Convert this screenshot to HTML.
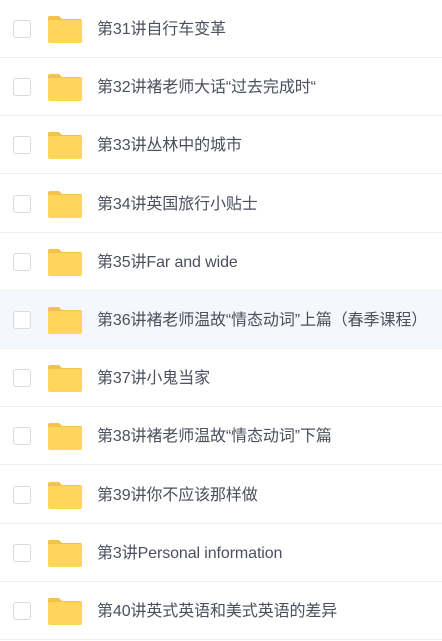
<!DOCTYPE html>
<html><head><meta charset="utf-8"><style>
body{margin:0;width:442px;height:638px;overflow:hidden;background:#fff;font-family:"Liberation Sans","Noto Sans CJK SC",sans-serif;}
.r{position:absolute;left:0;width:442px;height:58px;border-bottom:1px solid #eef0f4;box-sizing:border-box;}
.r.h{background:#f4f7fc;}
.cb{position:absolute;left:13px;top:20px;width:18px;height:18px;border:1px solid #d6dae2;border-radius:3px;box-sizing:border-box;background:#fff;}
.f{position:absolute;left:47px;top:15px;}
.t{position:absolute;left:97px;top:1px;line-height:58px;font-size:16px;color:#4a505c;white-space:nowrap;letter-spacing:-0.1px;}
</style></head><body>
<script>
const items=["第31讲自行车变革","第32讲褚老师大话“过去完成时“","第33讲丛林中的城市","第34讲英国旅行小贴士","第35讲Far and wide","第36讲褚老师温故“情态动词”上篇（春季课程）","第37讲小鬼当家","第38讲褚老师温故“情态动词”下篇","第39讲你不应该那样做","第3讲Personal information","第40讲英式英语和美式英语的差异"];
items.forEach((s,i)=>{document.write(`<div class="r${i==5?' h':''}" style="top:${(i*58.2).toFixed(1)}px"><div class="cb"></div><svg class="f" width="36" height="29" viewBox="0 0 36 29"><path d="M1 3a2 2 0 0 1 2-2h9l3 3h18a2 2 0 0 1 2 2v3H1z" fill="#f2c14e"/><rect x="1" y="5" width="34" height="23" rx="2" fill="#ffd65a"/></svg><div class="t">${s}</div></div>`)});
</script>
</body></html>
